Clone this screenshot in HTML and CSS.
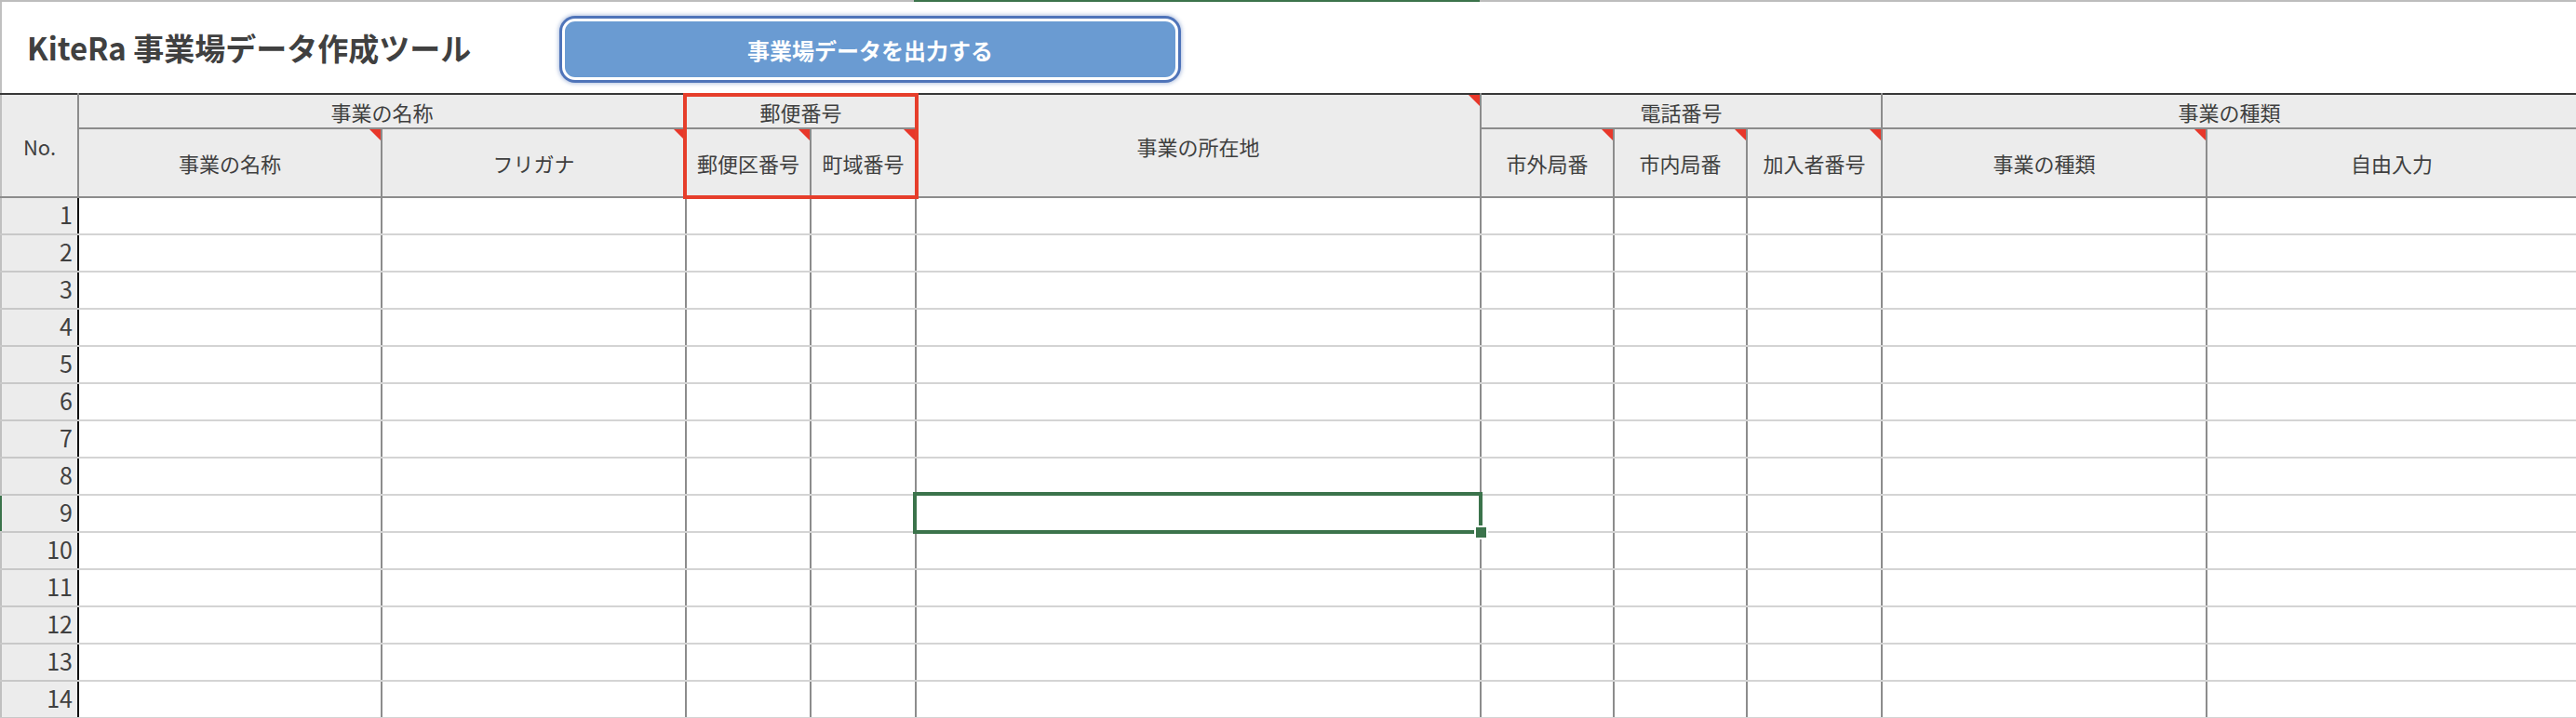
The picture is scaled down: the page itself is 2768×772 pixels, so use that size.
FILE: index.html
```html
<!DOCTYPE html>
<html lang="ja">
<head>
    <meta charset="UTF-8">
    <title>KiteRa 事業場データ作成ツール</title>
    <link rel="stylesheet" href="styles.css">
</head>
<body>

<div class="colbar">
    <span class="colbar-lead"></span>
    <span class="colbar-active"></span>
</div>

<header class="toolbar">
    <h1 class="title">KiteRa 事業場データ作成ツール</h1>
    <div class="export-btn">事業場データを出力する</div>
</header>

<div class="sheet">
    <table class="grid">
        <colgroup>
            <col class="c-no">
            <col class="c-name">
            <col class="c-kana">
            <col class="c-zip1">
            <col class="c-zip2">
            <col class="c-addr">
            <col class="c-tel1">
            <col class="c-tel2">
            <col class="c-tel3">
            <col class="c-kind">
            <col class="c-free">
        </colgroup>
        <thead>
            <tr class="head-group">
                <th rowspan="2" class="no-head">No.</th>
                <th colspan="2">事業の名称</th>
                <th colspan="2">郵便番号</th>
                <th rowspan="2" class="note addr-head">事業の所在地</th>
                <th colspan="3">電話番号</th>
                <th colspan="2">事業の種類</th>
            </tr>
            <tr class="head-sub">
                <th class="note">事業の名称</th>
                <th class="note">フリガナ</th>
                <th class="note">郵便区番号</th>
                <th class="note">町域番号</th>
                <th class="note">市外局番</th>
                <th class="note">市内局番</th>
                <th class="note">加入者番号</th>
                <th class="note">事業の種類</th>
                <th>自由入力</th>
            </tr>
        </thead>
        <tbody>
            <tr><td class="no">1</td><td></td><td></td><td></td><td></td><td></td><td></td><td></td><td></td><td></td><td></td></tr>
            <tr><td class="no">2</td><td></td><td></td><td></td><td></td><td></td><td></td><td></td><td></td><td></td><td></td></tr>
            <tr><td class="no">3</td><td></td><td></td><td></td><td></td><td></td><td></td><td></td><td></td><td></td><td></td></tr>
            <tr><td class="no">4</td><td></td><td></td><td></td><td></td><td></td><td></td><td></td><td></td><td></td><td></td></tr>
            <tr><td class="no">5</td><td></td><td></td><td></td><td></td><td></td><td></td><td></td><td></td><td></td><td></td></tr>
            <tr><td class="no">6</td><td></td><td></td><td></td><td></td><td></td><td></td><td></td><td></td><td></td><td></td></tr>
            <tr><td class="no">7</td><td></td><td></td><td></td><td></td><td></td><td></td><td></td><td></td><td></td><td></td></tr>
            <tr><td class="no">8</td><td></td><td></td><td></td><td></td><td></td><td></td><td></td><td></td><td></td><td></td></tr>
            <tr><td class="no cur">9</td><td></td><td></td><td></td><td></td><td class="sel"><span class="fill-handle"></span></td><td></td><td></td><td></td><td></td><td></td></tr>
            <tr><td class="no">10</td><td></td><td></td><td></td><td></td><td></td><td></td><td></td><td></td><td></td><td></td></tr>
            <tr><td class="no">11</td><td></td><td></td><td></td><td></td><td></td><td></td><td></td><td></td><td></td><td></td></tr>
            <tr><td class="no">12</td><td></td><td></td><td></td><td></td><td></td><td></td><td></td><td></td><td></td><td></td></tr>
            <tr><td class="no">13</td><td></td><td></td><td></td><td></td><td></td><td></td><td></td><td></td><td></td><td></td></tr>
            <tr><td class="no">14</td><td></td><td></td><td></td><td></td><td></td><td></td><td></td><td></td><td></td><td></td></tr>
        </tbody>
    </table>
    <div class="postal-mark"></div>
</div>

</body>
</html>
```

FILE: styles.css
```css
* {
    box-sizing: border-box;
}
body {
    margin: 0;
    font-family: "Noto Sans CJK JP", "Noto Sans", sans-serif;
    color: #3c3c3c;
    background-color: #ffffff;
    overflow: hidden;
}

/* column heading strip at the very top */
.colbar {
    display: flex;
    height: 2px;
    background-color: #bdbdbd;
}
.colbar-lead {
    width: 982px;
}
.colbar-active {
    width: 608px;
    background-color: #3b734b;
}

.toolbar {
    display: flex;
    align-items: center;
    height: 98px;
    border-left: 2px solid #c0c0c0;
}
.title {
    margin: 0;
    width: 599px;
    padding-left: 27px;
    font-size: 33px;
    font-weight: 700;
    color: #404040;
    white-space: nowrap;
}
.export-btn {
    display: flex;
    align-items: center;
    justify-content: center;
    width: 662px;
    height: 66px;
    margin-left: 3px;
    margin-top: 4px;
    background-color: #6a9bd2;
    border: 3px solid #ffffff;
    border-radius: 14px;
    box-shadow: 0 0 0 3px #4f74b9, 0 0 4px 4px rgba(79, 116, 185, 0.45);
    color: #ffffff;
    font-size: 24px;
    font-weight: 700;
}

.sheet {
    position: relative;
}
.grid {
    width: 2768px;
    table-layout: fixed;
    border-collapse: collapse;
}
.c-no { width: 83px; }
.c-name { width: 326px; }
.c-kana { width: 327px; }
.c-zip1 { width: 134px; }
.c-zip2 { width: 113px; }
.c-addr { width: 607px; }
.c-tel1 { width: 143px; }
.c-tel2 { width: 143px; }
.c-tel3 { width: 145px; }
.c-kind { width: 349px; }
.c-free { width: 398px; }

.grid th {
    position: relative;
    padding: 0;
    background-color: #ececec;
    font-size: 22px;
    font-weight: 400;
    color: #3f3f3f;
    border-right: 2px solid #8c8c8c;
    border-bottom: 2px solid #8c8c8c;
    white-space: nowrap;
}
.head-group th {
    height: 37px;
    border-top: 2px solid #383838;
}
.head-sub th {
    height: 74px;
}
.no-head {
    border-left: 2px solid #c0c0c0;
}

/* red comment markers */
.note::after {
    content: "";
    position: absolute;
    top: 0;
    right: 0;
    border-top: 12px solid #e8372a;
    border-left: 12px solid transparent;
}

.grid td {
    height: 40px;
    padding: 0;
    border-right: 2px solid #8c8c8c;
    border-bottom: 2px solid #d4d4d4;
}
.grid td.no {
    padding-right: 5px;
    padding-bottom: 3px;
    background-color: #ececec;
    border-left: 2px solid #c0c0c0;
    border-right: 2px solid #111111;
    border-bottom-color: #c8c8c8;
    text-align: right;
    font-size: 25px;
    line-height: 1;
    color: #404040;
}
.grid td.no.cur {
    border-left-color: #3b734b;
}

/* active cell */
.grid td.sel {
    position: relative;
}
.grid td.sel::after {
    content: "";
    position: absolute;
    left: -4px;
    top: -4px;
    right: -3px;
    bottom: -3px;
    border: 4px solid #3b734b;
}
.fill-handle {
    position: absolute;
    right: -7px;
    bottom: -7px;
    z-index: 2;
    width: 11px;
    height: 11px;
    background-color: #3b734b;
    box-shadow: 0 0 0 2px #ffffff;
}

.postal-mark {
    position: absolute;
    left: 734px;
    top: 0;
    width: 253px;
    height: 114px;
    border: 4px solid #e63e2b;
}
```
